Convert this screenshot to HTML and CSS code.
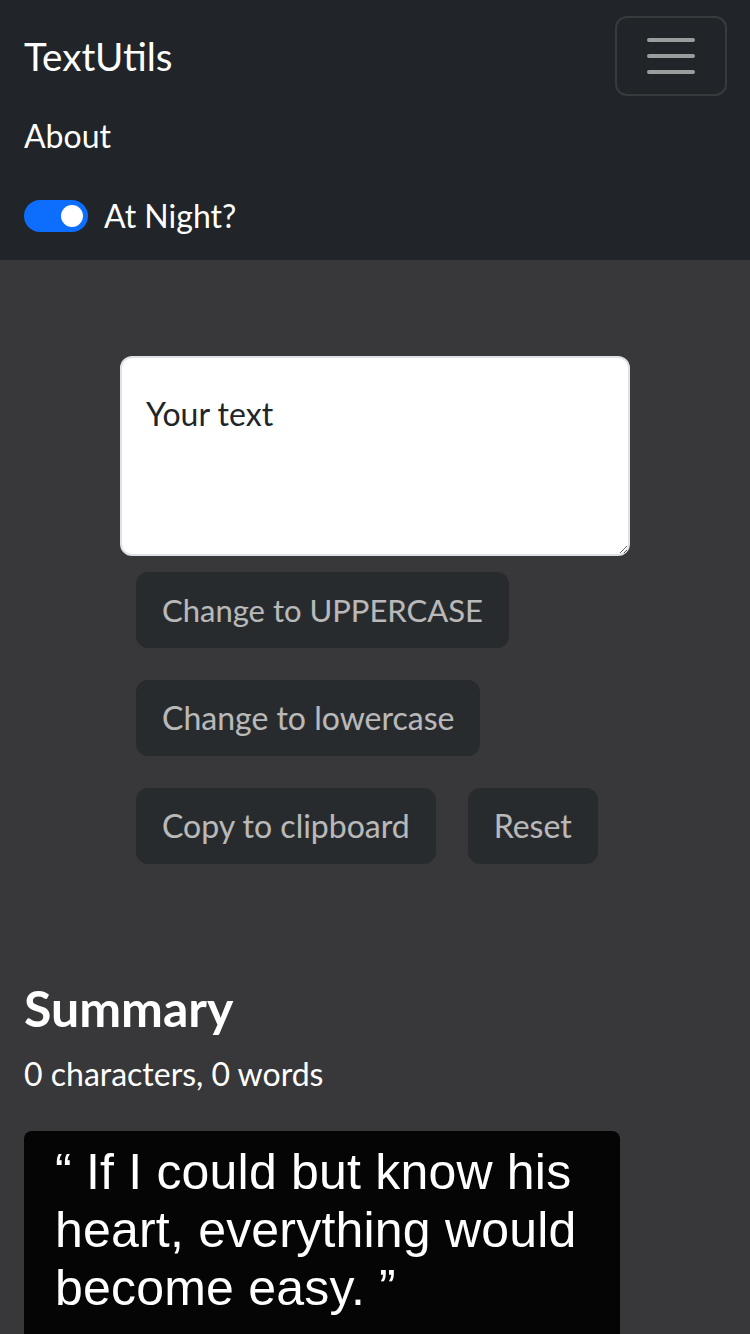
FILE: index.html
```html
<!DOCTYPE html>
<html lang="en">
<head>
<meta charset="utf-8">
<title>TextUtils</title>
<link rel="stylesheet" href="styles.css">
</head>
<body>
<nav class="navbar">
  <div class="nav-top">
    <a class="brand" href="#">TextUtils</a>
    <button class="toggler" type="button" aria-label="Toggle navigation">
      <svg class="toggler-icon" viewBox="0 0 30 30" width="60" height="60">
        <path d="M4 7h22M4 15h22M4 23h22" stroke="rgba(255,255,255,0.55)" stroke-width="2" stroke-linecap="round" fill="none"/>
      </svg>
    </button>
  </div>
  <ul class="nav-list">
    <li><a class="nav-link" href="#">About</a></li>
  </ul>
  <div class="switch-row">
    <span class="switch"><span class="knob"></span></span>
    <label class="switch-label">At Night?</label>
  </div>
</nav>

<main class="main">
  <div class="editor">
    <textarea class="textbox">Your text</textarea>
    <div class="actions">
      <button class="btn btn-caps" disabled>Change to UPPERCASE</button>
      <button class="btn" disabled>Change to lowercase</button>
      <button class="btn" disabled>Copy to clipboard</button>
      <button class="btn" disabled>Reset</button>
    </div>
  </div>

  <section class="summary">
    <h2 class="summary-title">Summary</h2>
    <p class="summary-text">0 characters, 0 words</p>
    <div class="quote">“ If I could but know his heart, everything would become easy. ”</div>
  </section>
</main>
</body>
</html>
```
FILE: styles.css
```css
html, body {
  margin: 0;
  padding: 0;
}
body {
  background: #38383a;
  font-family: Lato, "Noto Sans", sans-serif;
  font-size: 32px;
  line-height: 48px;
  color: #ffffff;
  overflow: hidden;
}

/* navbar */
.navbar {
  background: #212529;
  padding: 16px 24px;
}
.nav-top {
  display: flex;
  justify-content: space-between;
  align-items: center;
  height: 80px;
}
.brand {
  color: #ffffff;
  text-decoration: none;
  font-size: 38.6px;
  line-height: 60px;
  padding: 10px 0;
}
.toggler {
  width: 112px;
  height: 80px;
  box-sizing: border-box;
  border: 2px solid rgba(255, 255, 255, 0.1);
  border-radius: 12px;
  background: transparent;
  padding: 8px 24px;
  display: flex;
  align-items: center;
  justify-content: center;
  margin-right: -1px;
}
.toggler-icon {
  display: block;
}
.nav-list {
  list-style: none;
  margin: 0 0 16px 0;
  padding: 0;
}
.nav-link {
  display: block;
  color: #ffffff;
  text-decoration: none;
  padding: 16px 0;
  line-height: 48px;
}
.switch-row {
  display: flex;
  align-items: center;
  height: 48px;
  margin-bottom: 4px;
}
.switch {
  width: 64px;
  height: 32px;
  box-sizing: border-box;
  border-radius: 16px;
  background: #0d6efd;
  border: 2px solid #0d6efd;
  display: flex;
  align-items: center;
  justify-content: flex-end;
  padding-right: 3px;
}
.knob {
  width: 22px;
  height: 22px;
  border-radius: 50%;
  background: #ffffff;
}
.switch-label {
  margin-left: 16px;
  color: #ffffff;
}

/* main */
.main {
  padding: 0 24px;
}
.editor {
  margin: 96px 96px 0 96px;
}
.textbox {
  display: block;
  width: 100%;
  height: 200px;
  box-sizing: border-box;
  border: 2px solid #dee2e6;
  border-radius: 12px;
  padding: 32px 24px 12px 24px;
  font-family: Lato, "Noto Sans", sans-serif;
  font-size: 32px;
  line-height: 48px;
  color: #212529;
  background: #ffffff;
  outline: none;
}
.actions {
  display: flex;
  flex-wrap: wrap;
  align-items: flex-start;
}
.btn {
  margin: 16px;
  padding: 12px 24px;
  border: 2px solid #212529;
  border-radius: 12px;
  background: #212529;
  color: #ffffff;
  font-family: Lato, "Noto Sans", sans-serif;
  font-size: 32px;
  line-height: 48px;
  opacity: 0.65;
  cursor: default;
}
.btn-caps {
  font-size: 31px;
}

.summary {
  margin-top: 100px;
}
.summary-title {
  margin: 0 0 14px 0;
  font-size: 50px;
  line-height: 56px;
  font-weight: 700;
  color: #ffffff;
}
.summary-text {
  margin: 0;
  color: #ffffff;
}
.quote {
  margin-top: 33px;
  width: 596px;
  height: 320px;
  box-sizing: border-box;
  background: #050505;
  border-radius: 8px;
  padding: 12px 20px 0 31px;
  font-family: "Liberation Sans", Arial, sans-serif;
  font-size: 50px;
  line-height: 58px;
  letter-spacing: 0.2px;
  color: #ffffff;
}
```
